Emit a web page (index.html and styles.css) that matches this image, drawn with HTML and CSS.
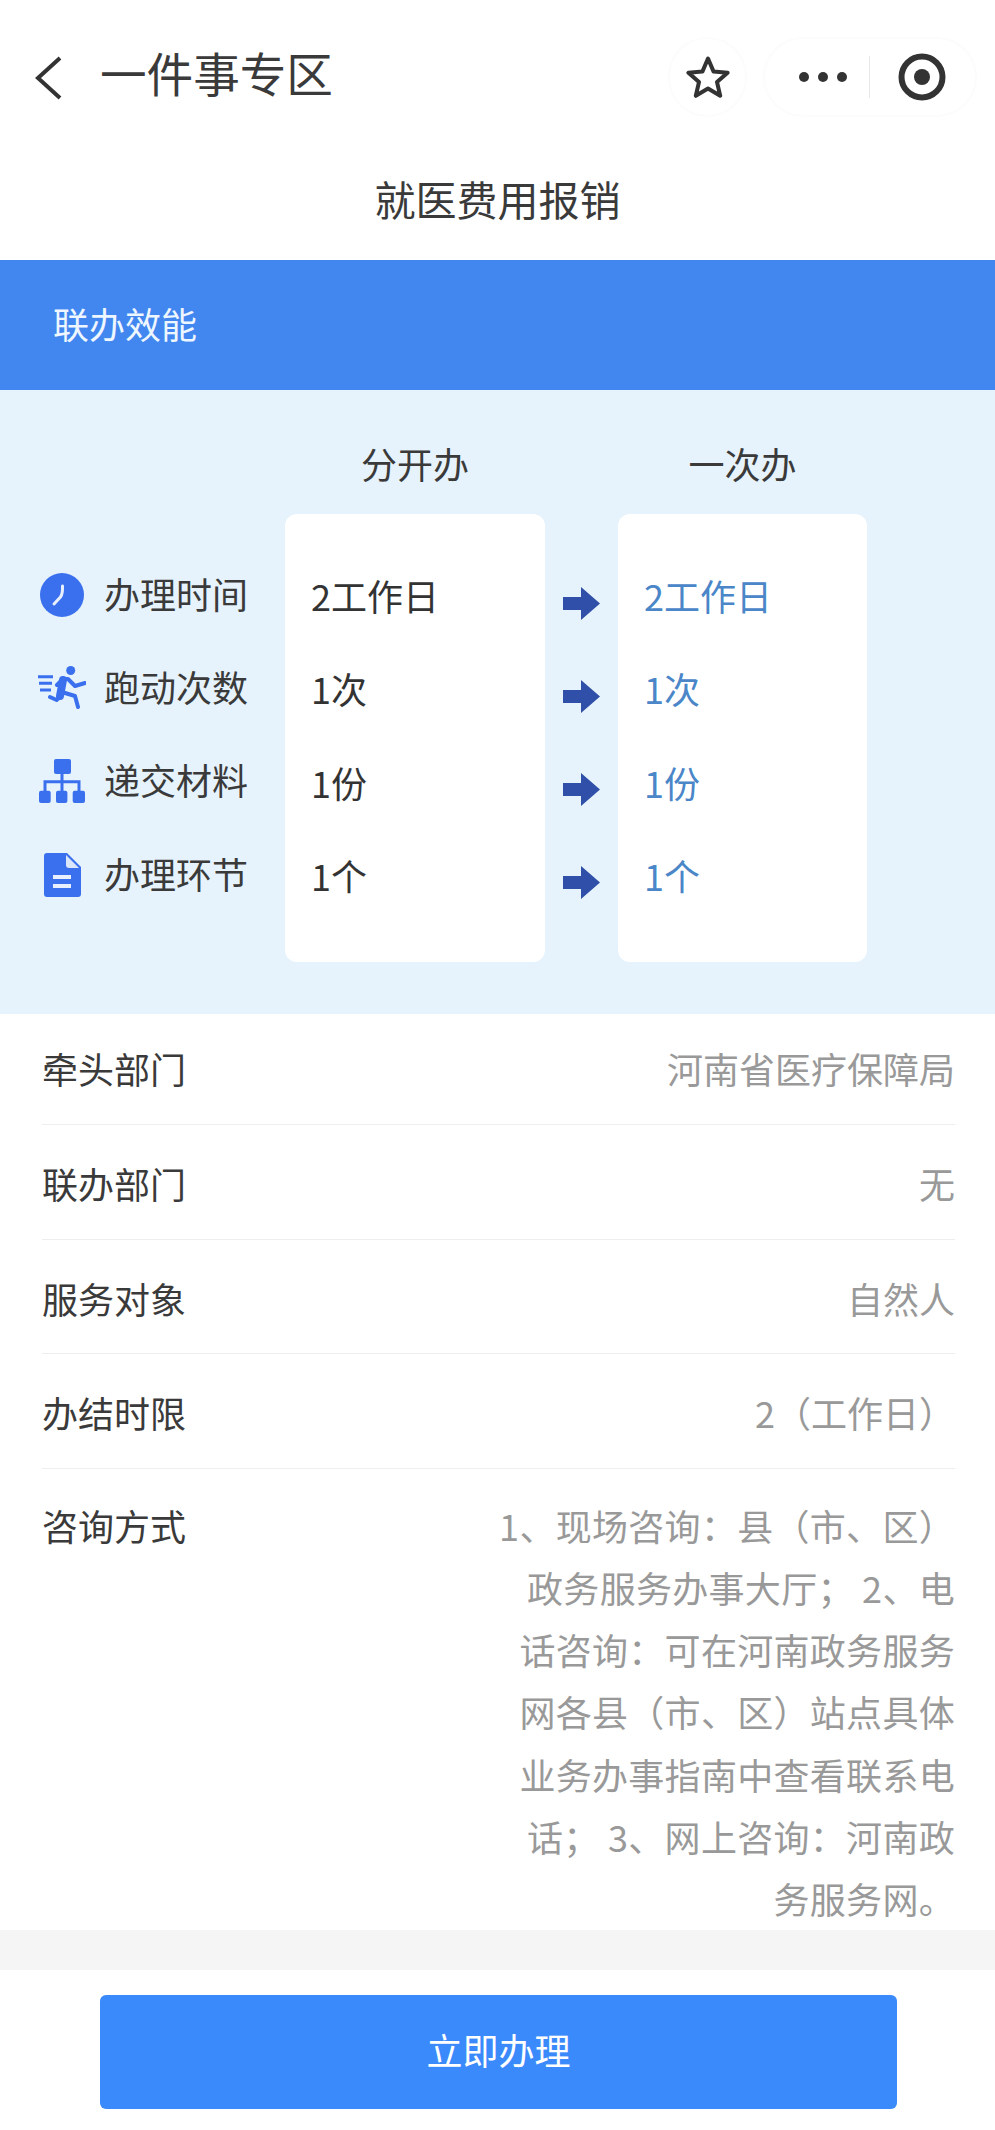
FILE: index.html
```html
<!DOCTYPE html>
<html lang="zh-CN">
<head>
<meta charset="utf-8">
<title>一件事专区</title>
<link rel="stylesheet" href="styles.css">
</head>
<body>
<div class="page">
  <header class="nav">
    <svg class="back" viewBox="0 0 27 44" aria-hidden="true"><path d="M25 2 3 22l22 20" /></svg>
    <h1 class="nav-title">一件事专区</h1>
    <div class="nav-actions">
      <div class="pill pill-star">
        <svg class="star" viewBox="0 0 44 44" aria-hidden="true"><path d="M22 3.5 27.6 16.6 41.6 17.8 31 27 34.2 40.8 22 33.5 9.8 40.8 13 27 2.4 17.8 16.4 16.6Z"/></svg>
      </div>
      <div class="pill pill-menu">
        <div class="dots"><span class="dot"></span><span class="dot"></span><span class="dot"></span></div>
        <span class="pill-divider"></span>
        <svg class="target" viewBox="0 0 48 48" aria-hidden="true"><circle class="ring" cx="24" cy="24" r="20.5"/><circle class="core" cx="24" cy="24" r="8"/></svg>
      </div>
    </div>
  </header>

  <h2 class="page-title">就医费用报销</h2>

  <div class="banner">联办效能</div>

  <section class="compare">
    <div class="head head-a">分开办</div>
    <div class="head head-b">一次办</div>

    <div class="labels">
      <div class="label">
        <span class="ico"><svg width="46" height="46" viewBox="0 0 46 46" aria-hidden="true"><circle class="fill" cx="23" cy="23" r="22"/><path class="hand" d="M23.5 14Q23.8 22 21.5 25L15 32"/></svg></span>
        <span class="label-text">办理时间</span>
      </div>
      <div class="label">
        <span class="ico"><svg width="48" height="44" viewBox="0 0 48 44" aria-hidden="true"><circle class="fill" cx="32.7" cy="4.5" r="4.5"/><path class="torso" d="M25 14 22 30"/><path class="limb" d="M19 19 25 13 30 13 37 20 47 17M23.7 26 37 30 40 41M22 31 18.6 34 12 31"/><path class="speed" d="M0 10.7H15M1 17.3H14M2 24H13"/></svg></span>
        <span class="label-text">跑动次数</span>
      </div>
      <div class="label">
        <span class="ico"><svg width="48" height="46" viewBox="0 0 48 46" aria-hidden="true"><rect class="fill" x="16" y="1" width="17" height="15" rx="2"/><rect class="fill" x="1" y="32.7" width="11.7" height="12.3" rx="2"/><rect class="fill" x="18" y="32.7" width="11.4" height="12.3" rx="2"/><rect class="fill" x="34.7" y="32.7" width="12.3" height="12.3" rx="2"/><path class="wire" d="M24 16V33M7 33V23.7H41V33"/></svg></span>
        <span class="label-text">递交材料</span>
      </div>
      <div class="label">
        <span class="ico"><svg width="37" height="44" viewBox="0 0 37 44" aria-hidden="true"><path class="fill" d="M3 0H23L37 14V41a3 3 0 0 1-3 3H3a3 3 0 0 1-3-3V3a3 3 0 0 1 3-3Z"/><path class="fold" d="M22 2 35 15H25a3 3 0 0 1-3-3Z"/><path class="lines" d="M9 24H27M9 33H27"/></svg></span>
        <span class="label-text">办理环节</span>
      </div>
    </div>

    <div class="card card-a">
      <div class="val">2工作日</div>
      <div class="val">1次</div>
      <div class="val">1份</div>
      <div class="val">1个</div>
    </div>

    <div class="arrows">
      <svg class="arrow" viewBox="0 0 37 33" aria-hidden="true"><path d="M0 10H18V0L37 16.5 18 33V23H0Z"/></svg>
      <svg class="arrow" viewBox="0 0 37 33" aria-hidden="true"><path d="M0 10H18V0L37 16.5 18 33V23H0Z"/></svg>
      <svg class="arrow" viewBox="0 0 37 33" aria-hidden="true"><path d="M0 10H18V0L37 16.5 18 33V23H0Z"/></svg>
      <svg class="arrow" viewBox="0 0 37 33" aria-hidden="true"><path d="M0 10H18V0L37 16.5 18 33V23H0Z"/></svg>
    </div>

    <div class="card card-b">
      <div class="val">2工作日</div>
      <div class="val">1次</div>
      <div class="val">1份</div>
      <div class="val">1个</div>
    </div>
  </section>

  <section class="info">
    <div class="row row-first"><div class="key">牵头部门</div><div class="value">河南省医疗保障局</div></div>
    <div class="row"><div class="key">联办部门</div><div class="value">无</div></div>
    <div class="row"><div class="key">服务对象</div><div class="value">自然人</div></div>
    <div class="row"><div class="key">办结时限</div><div class="value">2（工作日）</div></div>
    <div class="row row-last"><div class="key">咨询方式</div><div class="value value-long">1、现场咨询：县（市、区）政务服务办事大厅； 2、电话咨询：可在河南政务服务网各县（市、区）站点具体业务办事指南中查看联系电话； 3、网上咨询：河南政务服务网。</div></div>
  </section>

  <div class="band"></div>

  <footer class="footer">
    <button class="cta" type="button">立即办理</button>
  </footer>
</div>
</body>
</html>
```

FILE: styles.css
```css
* { box-sizing: border-box; }
html, body { margin: 0; padding: 0; background: #fff; }
body {
  font-family: "Noto Sans CJK SC", "Noto Sans", sans-serif;
  color: #333;
  font-size: 36px;
}
.page { width: 995px; height: 2130px; overflow: hidden; }

/* nav */
.nav {
  height: 150px;
  display: flex;
  align-items: center;
  padding: 0 18px 0 35px;
}
.back { width: 27px; height: 44px; flex: none; margin-top: 6px; }
.back path { fill: none; stroke: #333; stroke-width: 4; }
.nav-title {
  margin: 0 0 6px 38px;
  font-size: 46.6px;
  font-weight: 400;
  line-height: 60px;
  color: #3a3a3a;
}
.nav-actions { margin-left: auto; margin-top: 3px; display: flex; gap: 16px; align-items: center; }
.pill {
  height: 80px;
  border-radius: 40px;
  background: #fff;
  border: 2px solid #fcfcfc;
  display: flex;
  align-items: center;
}
.pill-star { width: 79px; justify-content: center; }
.star { width: 44px; height: 44px; }
.star path { fill: none; stroke: #333; stroke-width: 4; stroke-linejoin: round; }
.pill-menu { width: 214px; padding-left: 34px; }
.dots { display: flex; gap: 9px; }
.dot { width: 10px; height: 10px; border-radius: 50%; background: #333; }
.pill-divider { width: 1px; height: 42px; background: #e8e8e8; margin-left: 22px; }
.target { width: 48px; height: 48px; margin-left: 28px; }
.ring { fill: none; stroke: #333; stroke-width: 6; }
.core { fill: #333; }

/* page title */
.page-title {
  margin: 0;
  height: 110px;
  padding-bottom: 15px;
  display: flex;
  align-items: center;
  justify-content: center;
  font-size: 41px;
  font-weight: 400;
  color: #3a3a3a;
}

/* banner */
.banner {
  height: 130px;
  display: flex;
  align-items: center;
  padding: 0 0 5px 53px;
  background: #4187ef;
  color: #eef6ff;
}

/* compare */
.compare {
  height: 624px;
  background: #e6f3fc;
  padding: 48px 0 0 0;
  display: grid;
  grid-template-columns: 285px 260px 73px 249px;
  grid-template-rows: 76px 448px;
  align-content: start;
}
.head { line-height: 50px; height: 50px; text-align: center; color: #3a3a3a; }
.head-a { grid-column: 2; grid-row: 1; }
.head-b { grid-column: 4; grid-row: 1; }
.labels { grid-column: 1; grid-row: 2; padding-top: 34px; }
.label { height: 93.33px; display: flex; align-items: center; color: #3a3a3a; }
.label-text { margin: 0 0 4px -1px; }
.ico { width: 105px; padding-left: 38px; padding-right: 19px; flex: none; display: flex; justify-content: center; }
.fill { fill: #3a70ee; }
.hand { fill: none; stroke: #e8f0ff; stroke-width: 3; stroke-linecap: round; stroke-linejoin: round; }
.torso { fill: none; stroke: #3a70ee; stroke-width: 8; stroke-linecap: round; }
.limb { fill: none; stroke: #3a70ee; stroke-width: 4; stroke-linecap: round; stroke-linejoin: round; }
.speed { fill: none; stroke: #3a70ee; stroke-width: 3; }
.wire { fill: none; stroke: #3a70ee; stroke-width: 3; }
.fold { fill: #dbe6fb; }
.lines { fill: none; stroke: #e8f0ff; stroke-width: 4; }
.card {
  grid-row: 2;
  background: #fff;
  border-radius: 12px;
  padding: 37px 0 0 26px;
}
.card-a { grid-column: 2; }
.card-b { grid-column: 4; color: #4a86c8; }
.val { height: 93.33px; padding-bottom: 5px; display: flex; align-items: center; }
.arrows { grid-column: 3; grid-row: 2; padding-top: 43px; display: flex; flex-direction: column; align-items: center; }
.arrow { width: 37px; height: 33px; margin: 30px 0; flex: none; }
.arrow path { fill: #2f4fa8; }

/* info rows */
.info { padding: 0 40px 0 42px; }
.row {
  display: flex;
  justify-content: space-between;
  line-height: 62px;
  padding: 27px 0 25px;
  border-bottom: 1px solid #eee;
  height: 114.5px;
}
.row-first { padding-top: 23px; height: 111px; }
.row-last { border-bottom: 0; padding: 25px 0 0; height: 461px; line-height: 62.3px; }
.key { color: #3a3a3a; flex: none; }
.value { color: #999; text-align: right; }
.value-long { width: 456px; letter-spacing: 0.3px; }

/* bottom */
.band { height: 40px; background: #f5f5f5; }
.footer { padding: 25px 98px 0 100px; }
.cta {
  display: block;
  width: 797px;
  height: 114px;
  border: 0;
  border-radius: 6px;
  background: #3b8afc;
  color: #fff;
  font: inherit;
  padding: 0 0 5px;
}
```
